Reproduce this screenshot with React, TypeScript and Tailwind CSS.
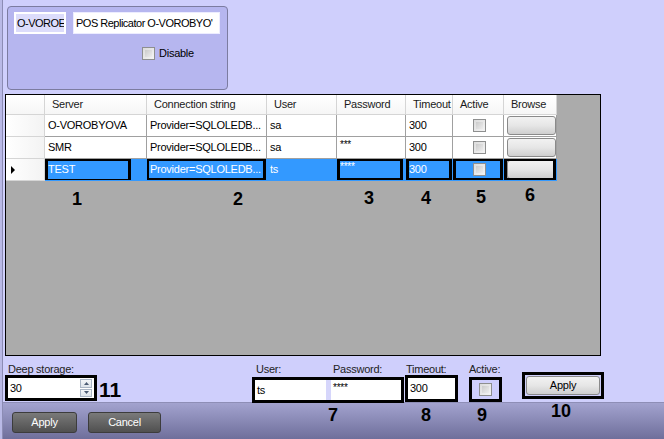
import React from 'react';

const cols = [
  { key: 'hdr', w: 'w-[39px]', label: '' },
  { key: 'server', w: 'w-[102px]', label: 'Server' },
  { key: 'conn', w: 'w-[120px]', label: 'Connection string' },
  { key: 'user', w: 'w-[70px]', label: 'User' },
  { key: 'pass', w: 'w-[69px]', label: 'Password' },
  { key: 'timeout', w: 'w-[47px]', label: 'Timeout' },
  { key: 'active', w: 'w-[51px]', label: 'Active' },
  { key: 'browse', w: 'w-[53px]', label: 'Browse' },
];

const rows = [
  { server: 'O-VOROBYOVA', conn: 'Provider=SQLOLEDB...', user: 'sa', pass: '', timeout: '300' },
  { server: 'SMR', conn: 'Provider=SQLOLEDB...', user: 'sa', pass: '***', timeout: '300' },
  { server: 'TEST', conn: 'Provider=SQLOLEDB...', user: 'ts', pass: '****', timeout: '300' },
];

const Check = () => (
  <div className="w-[13px] h-[13px] border border-[#8e8f8f] bg-gradient-to-br from-[#dcdcdc] to-[#f4f4f4] p-[2px]">
    <div className="w-full h-full bg-gradient-to-br from-[#cbcbcb] to-[#ededed]" />
  </div>
);

const BrowseBtn = () => (
  <div className="w-[49px] h-[19px] rounded-[3px] border border-[#8a8a8a] bg-gradient-to-b from-[#f2f2f2] via-[#e6e6e6] to-[#cfcfcf]" />
);

const Box = ({ className = '' }: { className?: string }) => (
  <div className={`absolute border-[3px] border-black pointer-events-none ${className}`} />
);

const Num = ({ children, className = '' }: { children: React.ReactNode; className?: string }) => (
  <div className={`absolute font-bold text-[18px] leading-none tracking-normal text-black ${className}`}>{children}</div>
);

const App: React.FC = () => {
  return (
    <div
      className="relative w-[664px] h-[439px] overflow-hidden bg-[#cfcffc] text-[11px] tracking-[-0.25px] text-black"
      style={{ fontFamily: '"Liberation Sans", Arial, sans-serif' }}
    >
      {/* left window edge */}
      <div className="absolute left-0 top-0 bottom-0 w-[3px] bg-[#b9b9e6] border-r border-[#8c8cb4]" />

      {/* top panel */}
      <div className="ml-[7px] pt-[6px]">
        <div className="w-[221px] h-[84px] rounded-[4px] border border-[#7c7ca0] bg-[#b6b6ef] px-[6px] pt-[5px]">
          <div className="flex gap-[7px]">
            <div className="w-[52px] h-[22px] border-2 border-white bg-[#dcdcfb] flex items-center pl-[1px] overflow-hidden whitespace-nowrap tracking-[-0.5px]">
              O-VOROE
            </div>
            <div className="w-[147px] h-[22px] bg-white border border-[#ececff] flex items-center pl-[2px] overflow-hidden whitespace-nowrap tracking-[-0.5px]">
              POS Replicator O-VOROBYO'
            </div>
          </div>
          <div className="flex items-center gap-[4px] ml-[128px] mt-[11px]">
            <Check />
            <span>Disable</span>
          </div>
        </div>
      </div>

      {/* grid */}
      <div className="relative ml-[5px] mt-[4px] w-[596px] h-[262px] border border-black bg-[#ababab]">
        <div className="flex h-[20px]">
          {cols.map((c) => (
            <div
              key={c.key}
              className={`${c.w} h-full shrink-0 bg-gradient-to-b from-white to-[#f6f6f6] border-r border-b border-[#d5d5d5] flex items-center pl-[7px] whitespace-nowrap text-[#1a1a1a]`}
            >
              {c.label}
            </div>
          ))}
        </div>
        {rows.map((r, i) => {
          const sel = i === 2;
          const cell = `h-full shrink-0 border-r border-b flex items-center pl-[3px] whitespace-nowrap overflow-hidden relative ${
            sel ? 'bg-[#3399ff] text-white border-[#3399ff]' : 'bg-white border-[#a0a0a0]'
          }`;
          return (
            <div key={i} className="flex h-[22px]">
              <div className="w-[39px] h-full shrink-0 border-r border-b border-[#d5d5d5] bg-gradient-to-r from-white to-[#f3f3f3] flex items-center pl-[5px]">
                {sel && (
                  <svg width="4" height="8" viewBox="0 0 4 8">
                    <path d="M0 0 L4 4 L0 8 Z" fill="#000" />
                  </svg>
                )}
              </div>
              <div className={`w-[102px] ${cell}`}>
                {r.server}
                {sel && <Box className="left-0 top-0 w-[86px] h-[24px] -mt-[1px]" />}
              </div>
              <div className={`w-[120px] ${cell}`}>
                {r.conn}
                {sel && <Box className="-left-[1px] -top-[1px] right-0 -bottom-[1px]" />}
              </div>
              <div className={`w-[70px] ${cell}`}>{r.user}</div>
              <div className={`w-[69px] ${cell} items-start pt-[3px]`}>
                <span className="text-[10px] leading-none">{r.pass}</span>
                {sel && <Box className="left-0 -top-[1px] right-[2px] -bottom-[1px]" />}
              </div>
              <div className={`w-[47px] ${cell}`}>
                {r.timeout}
                {sel && <Box className="left-0 -top-[1px] right-0 -bottom-[1px]" />}
              </div>
              <div className={`w-[51px] ${cell} justify-center pl-0`}>
                <Check />
                {sel && <Box className="left-0 -top-[1px] right-0 -bottom-[1px]" />}
              </div>
              <div className={`w-[53px] ${cell} justify-center pl-0 ${sel ? 'bg-[#ababab]' : ''}`}>
                <BrowseBtn />
                {sel && <Box className="left-0 -top-[1px] right-0 -bottom-[1px]" />}
              </div>
            </div>
          );
        })}

        <Num className="left-[66px] top-[95px]">1</Num>
        <Num className="left-[227px] top-[95px]">2</Num>
        <Num className="left-[358px] top-[94px]">3</Num>
        <Num className="left-[415px] top-[94px]">4</Num>
        <Num className="left-[470px] top-[93px]">5</Num>
        <Num className="left-[519px] top-[91px]">6</Num>
      </div>

      {/* bottom fields */}
      <div className="relative h-[46px] flex">
        <div className="ml-[8px] mt-[8px]">
          <div className="leading-none text-[#222]">Deep storage:</div>
        </div>
        <div className="absolute left-[5px] top-[19px] w-[92px] h-[26px] border-[3px] border-black bg-white flex items-center">
          <span className="pl-[2px]">30</span>
          <div className="ml-auto mr-[2px] w-[12px] h-[18px] flex flex-col gap-[1px]">
            <div className="flex-1 border border-[#a9b4c4] bg-gradient-to-b from-[#f4f6f9] to-[#dde3ea] flex items-center justify-center">
              <svg width="5" height="3" viewBox="0 0 5 3"><path d="M0 3 L2.5 0 L5 3 Z" fill="#4b5b73" /></svg>
            </div>
            <div className="flex-1 border border-[#a9b4c4] bg-gradient-to-b from-[#f4f6f9] to-[#dde3ea] flex items-center justify-center">
              <svg width="5" height="3" viewBox="0 0 5 3"><path d="M0 0 L2.5 3 L5 0 Z" fill="#4b5b73" /></svg>
            </div>
          </div>
        </div>
        <div className="absolute left-[99px] top-[23px] font-bold text-[21px] leading-none tracking-normal">11</div>

        <div className="absolute left-[256px] top-[8px] leading-none text-[#222]">User:</div>
        <div className="absolute left-[333px] top-[8px] leading-none text-[#222]">Password:</div>
        <div className="absolute left-[406px] top-[8px] leading-none text-[#222]">Timeout:</div>
        <div className="absolute left-[469px] top-[8px] leading-none text-[#222]">Active:</div>

        <div className="absolute left-[252px] top-[21px] w-[152px] h-[26px] border-[3px] border-black bg-[#d6d6fb] flex gap-[5px]">
          <div className="w-[71px] h-full bg-white flex items-center pl-[2px]">ts</div>
          <div className="flex-1 h-full bg-white flex items-start pl-[2px] pt-[3px]">
            <span className="text-[10px] leading-none">****</span>
          </div>
        </div>
        <div className="absolute left-[405px] top-[19px] w-[53px] h-[27px] border-[3px] border-black bg-white flex items-center pl-[2px]">
          300
        </div>
        <div className="absolute left-[469px] top-[21px] w-[33px] h-[25px] border-[3px] border-black flex items-center justify-center">
          <Check />
        </div>
        <div className="absolute left-[522px] top-[16px] w-[82px] h-[27px] border-[3px] border-black p-[1px]">
          <div className="w-full h-full rounded-[3px] border border-[#8a8a8a] bg-gradient-to-b from-[#f2f2f2] via-[#e6e6e6] to-[#cfcfcf] flex items-center justify-center">
            Apply
          </div>
        </div>
      </div>

      {/* bottom bar */}
      <div className="h-[37px] bg-gradient-to-b from-[#a3a3cf] to-[#6f6f9b] border-t border-[#8e8eb6] flex items-center gap-[11px] pl-[12px] pt-[3px]">
        <div className="w-[65px] h-[21px] rounded-[3px] border border-[#3c3c3c] bg-gradient-to-b from-[#7a7a7a] to-[#505050] text-white flex items-center justify-center">
          Apply
        </div>
        <div className="w-[73px] h-[21px] rounded-[3px] border border-[#3c3c3c] bg-gradient-to-b from-[#7a7a7a] to-[#505050] text-white flex items-center justify-center">
          Cancel
        </div>
      </div>

      {/* annotations over bottom bar */}
      <Num className="left-[328px] top-[406px]">7</Num>
      <Num className="left-[421px] top-[406px]">8</Num>
      <Num className="left-[477px] top-[406px]">9</Num>
      <Num className="left-[551px] top-[402px]">10</Num>
    </div>
  );
};

export default App;
